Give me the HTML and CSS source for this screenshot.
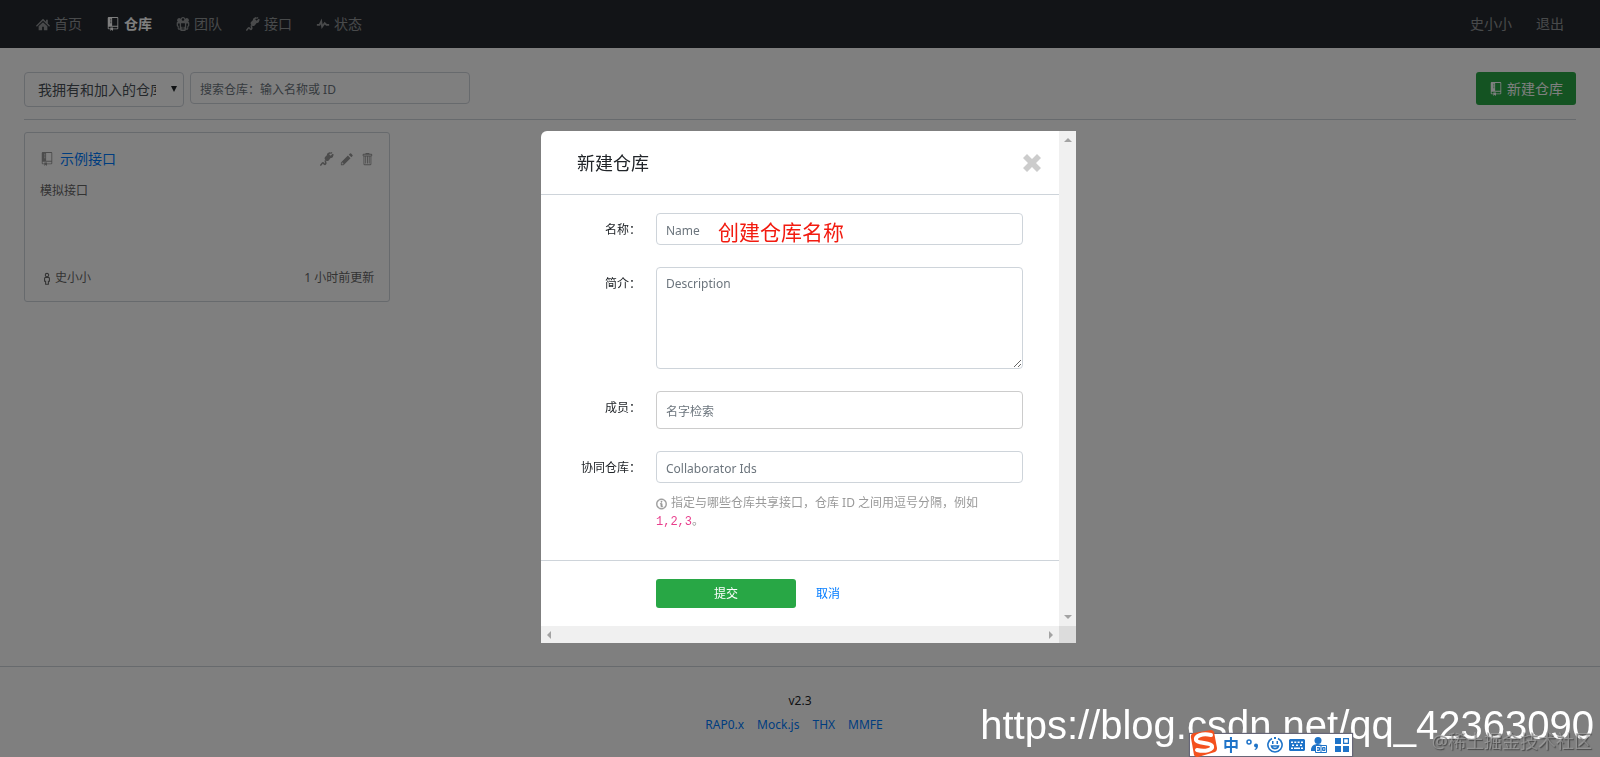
FILE: index.html
```
<!DOCTYPE html>
<html lang="zh-CN">
<head>
  <meta charset="UTF-8" />
  <meta name="viewport" content="width=device-width, initial-scale=1.0"/>
  <title>RAP2 仓库</title>
  <link rel="stylesheet" href="styles.css">
</head>
<body>

<!-- Icons -->
<svg class="sprite" aria-hidden="true">
  <symbol id="home" viewBox="0 0 16 16"><path d="M8 2L0 10l1 1 7-6.600 7 6.600 1-1-2.500-2.500V3h-2v2.500zM8 6l-5 4.700V15h4v-4h2v4h4v-4.300z"/></symbol>
  <symbol id="repo" viewBox="0 0 12 16"><path d="M4 9H3V8h1v1zm0-3H3v1h1V6zm0-2H3v1h1V4zm0-2H3v1h1V2zm8-1v12c0 .55-.45 1-1 1H6v2l-1.500-1.500L3 16v-2H1c-.55 0-1-.45-1-1V1c0-.55.45-1 1-1h10c.55 0 1 .45 1 1zm-1 10H1v2h2v-1h3v1h5v-2zm0-10H5v9h6V1z"/></symbol>
  <symbol id="team" viewBox="0 0 16 16"><path fill-rule="evenodd" d="M8 0a3 3 0 0 1 2.700 2A2.400 2.400 0 0 1 14 5.500c.9.300 1.200 1 1.200 1.700v2.300c0 1-.4 1.600-1.200 1.600V13c0 1-.8 1.500-1.800 1.500H11V15c0 .7-.4 1-1 1H6c-.6 0-1-.3-1-1v-.5H3.800c-1 0-1.800-.5-1.800-1.500v-1.900c-.8 0-1.200-.6-1.200-1.600V7.200c0-.7.3-1.400 1.200-1.700A2.400 2.400 0 0 1 5.300 2 3 3 0 0 1 8 0zM8 1.400a1.500 1.500 0 1 0 0 3 1.500 1.500 0 0 0 0-3zM5.800 7v4h.8v3.600h.9V11h1v3.600h.9V11h.8V7zM2.200 7.500v2.400h.9V13h1.200V7.500zm9.500 0V13h1.200V9.900h.9V7.500z"/></symbol>
  <symbol id="plug" viewBox="0 0 16 16"><path d="M5.800 5.800L8 3.500c-.3-1 .2-2 1-2.500L11.500 0l1 1.200-2 1.400 1.700 1.700L14.400 2l1.300.9-1 2.800c-.5 1-1.500 1.400-2.500 1.200L9.900 9.700c-.9.9-2.100.9-3 .2l-1-1c-.8-.9-.9-2.200-.1-3.100zM13.200 0l1 .3-1.500 2.200-.8-.8z"/><path fill="none" stroke="currentColor" stroke-width="1.800" d="M6.500 9.500c-1.500 1.200 1.200 2.800-.2 4.300s-2-2.300-3.600-1.200-.4 2.400-2.500 2.400"/></symbol>
  <symbol id="pulse" viewBox="0 0 14 16"><path d="M11.500 8L8.800 5.400 6.600 8.500 5.500 1.600 2.380 8H0v2h3.600l.9-1.800.9 5.400L9 8.500l1.600 1.500H14V8h-2.500z"/></symbol>
  <symbol id="pencil" viewBox="0 0 14 16"><path d="M0 12v3h3l8-8-3-3-8 8zm3 2H1v-2h1v1h1v1zm10.300-9.300L12 6 9 3l1.300-1.300a.996.996 0 0 1 1.410 0l1.590 1.590c.39.39.39 1.020 0 1.410z"/></symbol>
  <symbol id="trash" viewBox="0 0 12 16"><path d="M11 2H9c0-.55-.45-1-1-1H5c-.55 0-1 .45-1 1H2c-.55 0-1 .45-1 1v1c0 .55.45 1 1 1v9c0 .55.45 1 1 1h7c.55 0 1-.45 1-1V5c.55 0 1-.45 1-1V3c0-.55-.45-1-1-1zm-1 12H3V5h1v8h1V5h1v8h1V5h1v8h1V5h1v9zm1-10H2V3h9v1z"/></symbol>
  <symbol id="person" viewBox="0 0 8 16"><path fill="none" stroke="currentColor" stroke-width="1.300" d="M4 1.700a2 2 0 1 1 0 4.200 2 2 0 0 1 0-4.200zM2.500 6.600h3c1 0 1.500.6 1.500 1.400v3.300H5.700V15H2.300v-3.700H1V8c0-.8.5-1.400 1.500-1.400z"/></symbol>
  <symbol id="info" viewBox="0 0 14 16"><path stroke="currentColor" stroke-width=".5" d="M6.300 5.690a.942.942 0 0 1-.28-.7c0-.28.09-.52.28-.7.19-.18.42-.28.7-.28.28 0 .52.09.7.28.18.19.28.42.28.7 0 .28-.09.52-.28.7a1 1 0 0 1-.7.3c-.28 0-.52-.11-.7-.3zM8 7.990c-.02-.25-.11-.48-.31-.69-.2-.19-.42-.3-.69-.31H6c-.27.02-.48.13-.69.31-.2.2-.3.44-.31.69h1v3c.02.27.11.5.31.69.2.2.42.31.69.31h1c.27 0 .48-.11.69-.31.2-.19.3-.42.31-.69H8V7.980v.01zM7 2.300c-3.140 0-5.700 2.540-5.700 5.680 0 3.140 2.560 5.700 5.700 5.700s5.700-2.550 5.700-5.700c0-3.150-2.560-5.690-5.700-5.690v.01zM7 .98c3.860 0 7 3.140 7 7s-3.140 7-7 7-7-3.120-7-7 3.140-7 7-7z"/></symbol>
</svg>

<!-- Navbar -->
<header class="header">
  <ul class="nav-links">
    <li><a href="#"><svg class="icon"><use href="#home"/></svg>首页</a></li>
    <li><a href="#" class="active"><svg class="icon"><use href="#repo"/></svg>仓库</a></li>
    <li><a href="#"><svg class="icon"><use href="#team"/></svg>团队</a></li>
    <li><a href="#"><svg class="icon"><use href="#plug"/></svg>接口</a></li>
    <li><a href="#"><svg class="icon"><use href="#pulse"/></svg>状态</a></li>
  </ul>
  <ul class="nav-links">
    <li><a href="#">史小小</a></li>
    <li><a href="#">退出</a></li>
  </ul>
</header>

<!-- Repositories -->
<main class="body">
  <div class="toolbar">
    <div class="select-wrap">
      <select class="select" aria-label="仓库范围">
        <option>我拥有和加入的仓库</option>
      </select>
    </div>
    <input type="text" class="form-control search" placeholder="搜索仓库：输入名称或 ID" aria-label="搜索仓库">
    <button type="button" class="btn-new"><svg class="icon"><use href="#repo"/></svg>新建仓库</button>
  </div>
  <div class="repo-list">
    <section class="card">
      <div class="card-title">
        <svg class="icon"><use href="#repo"/></svg>
        <a href="#" class="card-name">示例接口</a>
        <div class="card-tools">
          <a href="#" aria-label="接口"><svg class="icon"><use href="#plug"/></svg></a>
          <a href="#" aria-label="编辑"><svg class="icon"><use href="#pencil"/></svg></a>
          <a href="#" aria-label="删除"><svg class="icon"><use href="#trash"/></svg></a>
        </div>
      </div>
      <div class="card-desc">模拟接口</div>
      <div class="card-foot">
        <span class="owner"><svg class="icon"><use href="#person"/></svg>史小小</span>
        <span>1 小时前更新</span>
      </div>
    </section>
  </div>
</main>

<footer class="footer">
  <div>v2.3</div>
  <div class="footer-links">
    <a href="#">RAP0.x</a>
    <a href="#">Mock.js</a>
    <a href="#">THX</a>
    <a href="#">MMFE</a>
  </div>
</footer>

<!-- Dialog -->
<div class="overlay">
  <div class="dialog" role="dialog" aria-labelledby="dialog-title">
    <form class="dialog-content">
      <div class="dialog-header">
        <h4 id="dialog-title">新建仓库</h4>
        <button type="button" class="close" aria-label="关闭">
          <svg viewBox="0 0 18 18"><path d="M4 0l5 5 5-5 4 4-5 5 5 5-4 4-5-5-5 5-4-4 5-5-5-5z"/></svg>
        </button>
      </div>
      <div class="dialog-body">
        <div class="form-group">
          <label for="name">名称：</label>
          <div class="field">
            <input type="text" id="name" class="form-control" placeholder="Name">
            <span class="note">创建仓库名称</span>
          </div>
        </div>
        <div class="form-group">
          <label for="description">简介：</label>
          <div class="field"><textarea id="description" class="form-control" placeholder="Description"></textarea></div>
        </div>
        <div class="form-group">
          <label for="members">成员：</label>
          <div class="field"><input type="text" id="members" class="form-control members" placeholder="名字检索"></div>
        </div>
        <div class="form-group">
          <label for="collaborators">协同仓库：</label>
          <div class="field">
            <input type="text" id="collaborators" class="form-control" placeholder="Collaborator Ids">
            <div class="help"><svg class="icon"><use href="#info"/></svg>指定与哪些仓库共享接口，仓库 ID 之间用逗号分隔，例如 <code>1,2,3</code>。</div>
          </div>
        </div>
      </div>
      <div class="dialog-footer">
        <button type="submit" class="btn-submit">提交</button>
        <a href="#">取消</a>
      </div>
    </form>
    <div class="scroll scroll-y" aria-hidden="true"><i class="arrow up"></i><i class="arrow down"></i></div>
    <div class="scroll scroll-x" aria-hidden="true"><i class="arrow left"></i><i class="arrow right"></i></div>
    <div class="scroll-corner"></div>
  </div>
</div>

<div class="blog-url">https://blog.csdn.net/qq_42363090</div>

<!-- Input method bar -->
<div class="ime">
  <svg class="ime-logo" viewBox="0 0 28 27"><path fill="#f4511e" d="M4 3L21 0c1.500 0 2.500 1 3 2l3 16c0 2-.5 3-2 4L8 27c-2 .3-3-.5-4-2L1 8c-.5-3 .5-4.500 3-5z"/><path fill="none" stroke="#fff" stroke-width="4" stroke-linecap="round" d="M21 5C12 3 5 6 6 10s15 2 16 6-7 6-15 4"/></svg>
  <span class="ime-lang">中</span>
  <svg class="ime-icon" viewBox="0 0 16 16"><circle cx="4" cy="5" r="2" fill="none" stroke="#1e73c8" stroke-width="1.500"/><path d="M9 8.500a2 2 0 1 1 4 0c0 2.500-1 4-3 4.500l-.5-1c1-.4 1.500-1 1.500-1.600-1.200 0-2-.8-2-1.900z"/></svg>
  <svg class="ime-icon" viewBox="0 0 16 16"><path fill="none" stroke="#1e73c8" stroke-width="1.600" d="M5 1.500A7.100 7.100 0 1 0 11 1.500M4.500 9c1 3.500 6 3.500 7 0z"/><path d="M5 4h1.500v3H5zM9.500 4H11v3H9.500zM7 0h2v2H7z"/></svg>
  <svg class="ime-icon" viewBox="0 0 16 16"><path fill-rule="evenodd" d="M1 2h14l1 1v10l-1 1H1l-1-1V3zm1 2.500V6h2V4.500zm3.300 0V6h2V4.500zm3.300 0V6h2V4.500zm3.400 0V6h2V4.500zM3 7.500V9h2V7.500zm4 0V9h2V7.500zm4 0V9h2V7.500zM2 10.500V12h2v-1.500zm3 0V12h6v-1.500zm7 0V12h2v-1.500z"/></svg>
  <svg class="ime-icon" viewBox="0 0 16 16"><circle cx="7" cy="3.500" r="3.500"/><path d="M0 13c0-4 3-6 7-6l4 1v6H0z"/><path fill="#fff" stroke="#1e73c8" d="M4.500 8.500h11v7h-11zM10 8.500v7M6 10.500h2.500v3H6M6 12h2M11.500 10.500H14v3h-2.500zM12 12h2"/></svg>
  <svg class="ime-icon" viewBox="0 0 16 16"><path fill-rule="evenodd" d="M2 1h6v6H2zm0 8h6v6H2zm8 0h6v6h-6zm0-8h6v6h-6zm1.200 1.200v3.600h3.600V2.200z"/></svg>
</div>

<div class="site-mark">@稀土掘金技术社区</div>

</body>
</html>
```

FILE: styles.css
```
* {
  margin: 0;
  padding: 0;
  box-sizing: border-box;
}

body {
  min-height: 100vh;
  display: flex;
  flex-direction: column;
  background: #fff;
  color: #212529;
  font-family: "Noto Sans", "Noto Sans CJK SC", sans-serif;
  font-size: 12px;
  line-height: 18px;
  overflow: hidden;
}

input, select, textarea, button {
  font: inherit;
  color: inherit;
}

a {
  color: #007bff;
  text-decoration: none;
}

ul {
  list-style: none;
}

.sprite {
  position: absolute;
  width: 0;
  height: 0;
}

.icon {
  width: 14px;
  height: 14px;
  fill: currentColor;
  flex-shrink: 0;
}

/* header */
.header {
  display: flex;
  justify-content: space-between;
  align-items: center;
  height: 48px;
  padding: 0 36px;
  background: #24292e;
  font-size: 14px;
}

.nav-links {
  display: flex;
  gap: 24px;
}

.nav-links a {
  display: flex;
  align-items: center;
  gap: 4px;
  color: rgba(255, 255, 255, 0.5);
}

.nav-links a.active {
  color: #fff;
  font-weight: bold;
}

/* toolbar */
.body {
  flex: 1;
  padding: 24px;
}

.toolbar {
  display: flex;
  align-items: flex-start;
  gap: 6px;
  padding-bottom: 12px;
  margin-bottom: 12px;
  border-bottom: 1px solid #ced4da;
}

.select-wrap {
  position: relative;
  width: 160px;
}

.select-wrap::after {
  content: "";
  position: absolute;
  right: 7px;
  top: 14px;
  border: 3px solid transparent;
  border-top: 6px solid #212529;
}

.select {
  appearance: none;
  display: block;
  width: 100%;
  height: 35px;
  padding: 0 27px 0 13px;
  border: 1px solid #ced4da;
  border-radius: 4px;
  background: #fff;
  color: #495057;
  font-size: 14px;
  overflow: hidden;
  text-overflow: clip;
}

.form-control {
  display: block;
  width: 100%;
  height: 32px;
  padding: 7px 9px 5px;
  border: 1px solid #ced4da;
  border-radius: 4px;
  background: #fff;
}

.form-control::placeholder {
  color: #6c757d;
}

.search {
  width: 280px;
}

.btn-new {
  display: flex;
  align-items: center;
  gap: 4px;
  height: 33px;
  margin-left: auto;
  padding: 0 13px;
  border: 0;
  border-radius: 3px;
  background: #28a745;
  color: #fff;
  font-size: 14px;
}

/* repository cards */
.repo-list {
  display: grid;
  grid-template-columns: repeat(4, 1fr);
  gap: 29px;
}

.card {
  display: flex;
  flex-direction: column;
  height: 170px;
  padding: 17px 15px 14px;
  border: 1px solid #ced4da;
  border-radius: 3px;
  color: #666;
}

.card-title {
  display: flex;
  align-items: center;
  gap: 6px;
  color: #999;
}

.card-name {
  font-size: 14px;
}

.card-tools {
  display: flex;
  gap: 6px;
  margin-left: auto;
}

.card-tools a {
  display: flex;
  color: #999;
}

.card-desc {
  flex: 1;
  margin-top: 14px;
}

.card-foot,
.owner {
  display: flex;
  justify-content: space-between;
  align-items: center;
}

.owner {
  gap: 1px;
}

.owner .icon {
  height: 13px;
}

/* footer */
.footer {
  padding: 25px 24px 23px;
  border-top: 1px solid #ced4da;
  text-align: center;
}

.footer-links {
  display: flex;
  justify-content: center;
  gap: 13px;
  margin-top: 6px;
  padding-right: 12px;
}

/* dialog */
.overlay {
  position: fixed;
  inset: 0;
  display: flex;
  align-items: center;
  justify-content: center;
  padding: 17px 0 0 17px;
  background: rgba(0, 0, 0, 0.5);
}

.dialog {
  display: grid;
  grid-template-columns: 518px 17px;
  grid-template-rows: auto 17px;
  border-radius: 6px 0 0 0;
  background: #fff;
  overflow: hidden;
}

.dialog-header {
  display: flex;
  justify-content: space-between;
  align-items: center;
  height: 64px;
  padding: 0 18px 0 36px;
  border-bottom: 1px solid #ced4da;
}

.dialog-header h4 {
  font-size: 18px;
  font-weight: normal;
}

.close {
  width: 18px;
  height: 18px;
  border: 0;
  background: none;
}

.close svg {
  display: block;
  fill: #ccc;
}

.dialog-body {
  display: flex;
  flex-direction: column;
  gap: 22px;
  padding: 18px 36px 29px;
}

.form-group {
  display: grid;
  grid-template-columns: 64px 1fr;
  gap: 15px;
}

.form-group label {
  padding-top: 8px;
  text-align: right;
  white-space: nowrap;
}

.field {
  position: relative;
}

textarea.form-control {
  height: 102px;
  resize: vertical;
}

.members {
  height: 38px;
  border-color: #ccc;
}

.help {
  margin-top: 11px;
  color: #999;
}

.help .icon {
  width: 11px;
  height: 12px;
  margin-right: 4px;
  vertical-align: -3px;
}

.help code {
  color: #e83e8c;
  font-family: "Liberation Mono", monospace;
  font-size: 12px;
}

.note {
  position: absolute;
  left: 62px;
  top: 4px;
  color: #f21b10;
  font-size: 21px;
  line-height: 30px;
}

.dialog-footer {
  display: flex;
  align-items: center;
  gap: 20px;
  padding: 18px 36px 18px 115px;
  border-top: 1px solid #ced4da;
}

.btn-submit {
  width: 140px;
  height: 29px;
  border: 0;
  border-radius: 3px;
  background: #28a745;
  color: #fff;
}

.scroll {
  display: flex;
  justify-content: space-between;
  align-items: center;
  background: #f0f0f0;
}

.scroll-y {
  flex-direction: column;
  padding: 7px 0;
}

.scroll-x {
  padding: 0 6px;
}

.scroll-corner {
  background: #dcdcdc;
}

.arrow {
  border: 4px solid transparent;
}

.up {
  border-top: 0;
  border-bottom-color: #a3a3a3;
}

.down {
  border-bottom: 0;
  border-top-color: #a3a3a3;
}

.left {
  border-left: 0;
  border-right-color: #a3a3a3;
}

.right {
  border-right: 0;
  border-left-color: #a3a3a3;
}

/* marks over the page */
.blog-url {
  position: fixed;
  right: 6px;
  bottom: 9px;
  color: #fff;
  font-family: "Liberation Sans", Arial, sans-serif;
  font-size: 40px;
  line-height: 46px;
}

.ime {
  position: fixed;
  right: 248px;
  bottom: 1px;
  display: flex;
  align-items: center;
  gap: 6px;
  height: 22px;
  padding: 0 3px 0 33px;
  background: #fff;
  box-shadow: 0 0 1px 1px #667;
}

.ime-logo {
  position: absolute;
  left: 0;
  bottom: -1px;
  width: 28px;
  height: 27px;
}

.ime-lang {
  color: #1e73c8;
  font-size: 16px;
  font-weight: bold;
}

.ime-icon {
  width: 16px;
  height: 16px;
  fill: #1e73c8;
}

.site-mark {
  position: fixed;
  right: 8px;
  bottom: 4px;
  color: rgba(170, 170, 170, 0.6);
  font-size: 18px;
  line-height: 24px;
  text-shadow: 1px 1px 1px rgba(50, 50, 50, 0.7);
}
```
